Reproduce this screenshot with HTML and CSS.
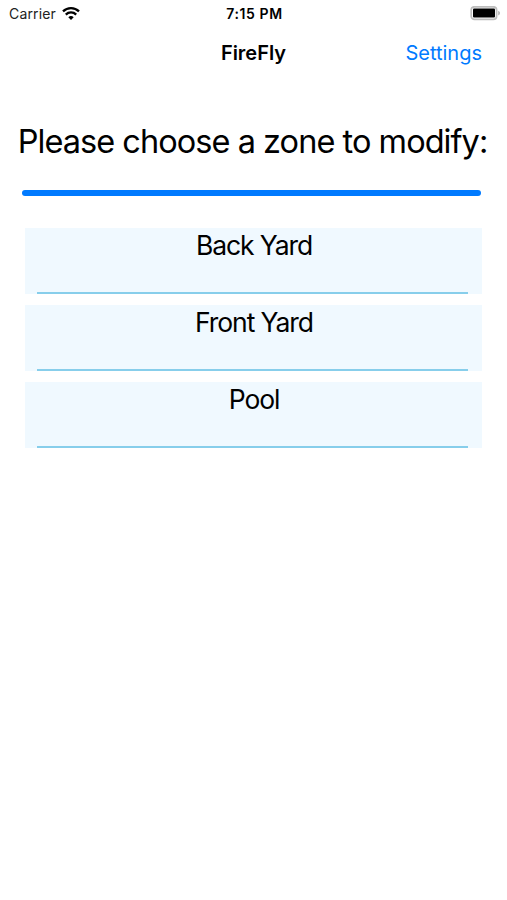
FILE: index.html
```
<!DOCTYPE html>
<html lang="en">
<head>
    <meta charset="UTF-8">
    <meta name="viewport" content="width=device-width, initial-scale=1.0">
    <title>FireFly</title>
    <link rel="stylesheet" href="styles.css">
</head>
<body>

<div class="status-bar">
    <div class="carrier">
        <span>Carrier</span>
        <svg class="wifi" viewBox="0 0 18 14" width="18" height="14">
            <path d="M1 4.4a11.5 11.5 0 0 1 16 0M3.8 7.6a7.4 7.4 0 0 1 10.4 0" fill="none" stroke="#000" stroke-width="2.3"/>
            <path d="M9 13 6.3 10.2a4 4 0 0 1 5.4 0z"/>
        </svg>
    </div>
    <span class="time">7:15 PM</span>
    <svg class="battery" viewBox="0 0 30 15" width="30" height="15">
        <rect x="1.2" y="0.8" width="25.4" height="12.6" rx="3.2" fill="#fff" stroke="#bdbdbd" stroke-width="1.7"/>
        <rect x="3" y="2.6" width="22" height="9" rx="1"/>
        <path d="M28.3 4.8q1.6.7 1.6 2.3t-1.6 2.3z" fill="#a6a6a6"/>
    </svg>
</div>

<header class="nav-bar">
    <h1>FireFly</h1>
    <a href="#" class="settings">Settings</a>
</header>

<main>
    <h2>Please choose a zone to modify:</h2>
    <div class="divider"></div>

    <!-- Zone list -->
    <div class="zones">
        <div class="zone">Back Yard</div>
        <div class="zone">Front Yard</div>
        <div class="zone">Pool</div>
    </div>
</main>

</body>
</html>
```
FILE: styles.css
```
body {
    margin: 0;
    min-height: 100vh;
    background-color: #fff;
    color: #000;
    font-family: Inter, sans-serif;
}
.status-bar {
    display: grid;
    grid-template-columns: 1fr auto 1fr;
    align-items: center;
    height: 27px;
    padding: 0 7px 0 9px;
    font-size: 14px;
}
.carrier {
    display: flex;
    align-items: center;
    gap: 6px;
    color: #222;
    letter-spacing: 0.15px;
}
.time {
    font-size: 14px;
    font-weight: 600;
    letter-spacing: 0.6px;
}
.battery {
    justify-self: end;
}
.nav-bar {
    display: grid;
    grid-template-columns: 1fr auto 1fr;
    align-items: center;
    height: 51px;
    padding: 0 25px;
}
h1 {
    grid-column: 2;
    margin: 0;
    font-size: 20px;
    font-weight: 600;
}
.settings {
    justify-self: end;
    color: #007aff;
    font-size: 20px;
    text-decoration: none;
}
h2 {
    margin: 43px 2px 0 0;
    font-size: 32.5px;
    font-weight: 400;
    line-height: 42px;
    letter-spacing: -0.96px;
    text-align: center;
    white-space: nowrap;
}
.divider {
    height: 6px;
    margin: 27px 26px 0 22px;
    border-radius: 3px;
    background-color: #007aff;
}
.zones {
    display: flex;
    flex-direction: column;
    gap: 11px;
    margin: 32px 25px 0;
}
.zone {
    display: flex;
    flex-direction: column;
    justify-content: space-between;
    height: 66px;
    background-color: #f0f9ff;
    font-size: 26.5px;
    line-height: 34px;
    letter-spacing: -1.1px;
    text-align: center;
    text-indent: 1px;
}
.zone::after {
    content: "";
    height: 2px;
    margin: 0 14px 0 12px;
    background-color: #87ceeb;
}
```
